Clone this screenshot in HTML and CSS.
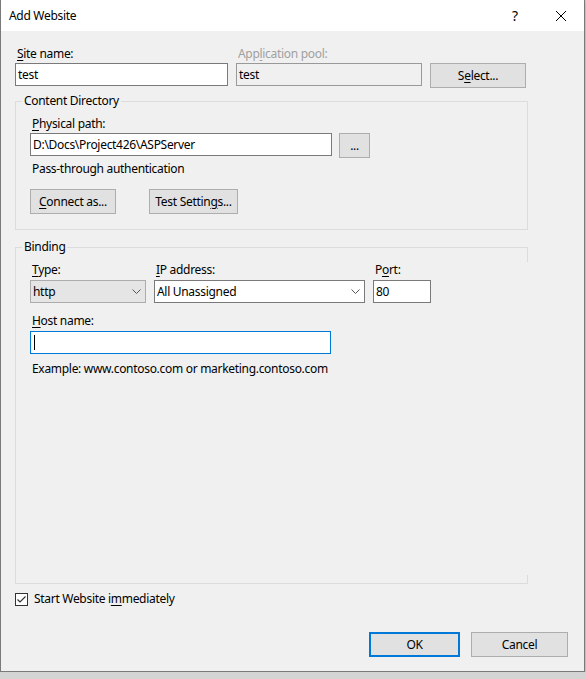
FILE: index.html
```html
<!DOCTYPE html>
<html lang="en">
<head>
    <meta charset="UTF-8">
    <title>Add Website</title>
    <link rel="stylesheet" href="styles.css">
</head>
<body>
<div class="window">
    <div class="titlebar">
        <span class="title">Add Website</span>
        <span class="caption-btn help">?</span>
        <span class="caption-btn close">
            <svg width="10" height="10" viewBox="0 0 10 10"><path d="M0 0L10 10M10 0L0 10" stroke="#000" stroke-width="1" fill="none"/></svg>
        </span>
    </div>

    <div class="body">
        <div class="site-row">
            <div class="lbl"><u>S</u>ite name:</div>
            <div class="lbl disabled">App<u>l</u>ication pool:</div>
            <div></div>
            <div class="box">test</div>
            <div class="box readonly">test</div>
            <button class="btn select">S<u>e</u>lect...</button>
        </div>

        <fieldset class="group content-dir">
            <legend>Content Directory</legend>
            <div class="lbl"><u>P</u>hysical path:</div>
            <div class="path-row">
                <div class="box path">D:\Docs\Project426\ASPServer</div>
                <button class="btn browse">...</button>
            </div>
            <div class="note">Pass-through authentication</div>
            <div class="btn-row">
                <button class="btn connect"><u>C</u>onnect as...</button>
                <button class="btn test">Test Settin<u>g</u>s...</button>
            </div>
        </fieldset>

        <fieldset class="group binding">
            <legend>Binding</legend>
            <div class="binding-row">
                <div class="lbl"><u>T</u>ype:</div>
                <div class="lbl"><u>I</u>P address:</div>
                <div class="lbl">P<u>o</u>rt:</div>
                <div class="box combo flat">http<svg class="chev" width="9" height="5" viewBox="0 0 9 5"><path d="M0.5 0.5L4.5 4.5L8.5 0.5" stroke="#555" fill="none"/></svg></div>
                <div class="box combo">All Unassigned<svg class="chev" width="9" height="5" viewBox="0 0 9 5"><path d="M0.5 0.5L4.5 4.5L8.5 0.5" stroke="#555" fill="none"/></svg></div>
                <div class="box">80</div>
            </div>
            <div class="lbl host-lbl"><u>H</u>ost name:</div>
            <div class="box host focused"><span class="caret"></span></div>
            <div class="note example">Example: www.contoso.com or marketing.contoso.com</div>
        </fieldset>
    </div>

    <div class="footer">
        <div class="check-row">
            <span class="checkbox">
                <svg width="11" height="11" viewBox="0 0 11 11"><path d="M1.5 5.5L4 8L9.5 2.5" stroke="#333" stroke-width="1.2" fill="none"/></svg>
            </span>
            <span>Start Website i<u>m</u>mediately</span>
        </div>
        <div class="dialog-btns">
            <button class="btn ok">OK</button>
            <button class="btn cancel">Cancel</button>
        </div>
    </div>
</div>
</body>
</html>
```

FILE: styles.css
```css
body {
    margin: 0;
    background: #d4d4d4;
    font-family: "Noto Sans", "Liberation Sans", sans-serif;
    font-size: 12px;
    line-height: 16px;
    letter-spacing: -0.3px;
    color: #000;
}

.window {
    box-sizing: border-box;
    width: 585px;
    height: 672px;
    background: #f0f0f0;
    border-left: 1px solid #7a7a7a;
    border-right: 1px solid #7a7a7a;
    border-bottom: 1px solid #7a7a7a;
    display: flex;
    flex-direction: column;
    box-shadow: 0 1px 4px rgba(0, 0, 0, 0.25);
}

/* title bar */
.titlebar {
    height: 31px;
    background: #fff;
    display: flex;
    align-items: center;
    flex: none;
}
.title {
    flex: 1;
    padding-left: 8px;
}
.caption-btn {
    width: 46px;
    height: 31px;
    display: flex;
    align-items: center;
    justify-content: center;
}
.help {
    font-size: 14px;
    padding-left: 2px;
}

/* dialog body */
.body {
    flex: 1;
    display: flex;
    flex-direction: column;
    padding: 15px 0 0 14px;
    width: 513px;
}

.lbl u, .btn u, .check-row u {
    text-decoration-thickness: 1px;
    text-underline-offset: 2px;
}
.lbl {
    padding-left: 2px;
}
.disabled {
    color: #a0a0a0;
}

.box {
    height: 23px;
    box-sizing: border-box;
    border: 1px solid #7a7a7a;
    background: #fff;
    padding: 0 2px;
    line-height: 21px;
    white-space: nowrap;
    overflow: hidden;
}
.readonly {
    background: #f0f0f0;
    border-color: #999;
}

.btn {
    font: inherit;
    letter-spacing: inherit;
    height: 25px;
    box-sizing: border-box;
    border: 1px solid #adadad;
    background: #e1e1e1;
    padding: 0;
    color: #000;
}

.site-row {
    display: grid;
    grid-template-columns: 213px 186px 96px;
    column-gap: 8px;
    row-gap: 1px;
    align-items: start;
}

/* group boxes */
.group {
    margin: 0;
    border: 1px solid #dcdcdc;
    padding: 7px 14px 15px 14px;
    min-width: 0;
}
.group legend {
    padding: 0 2px;
    margin-left: -8px;
    line-height: 16px;
}
.content-dir {
    margin-top: 5px;
}
.content-dir .lbl {
    margin-bottom: 1px;
}
.path-row {
    display: flex;
    gap: 7px;
    align-items: flex-start;
}
.path {
    width: 302px;
}
.browse {
    width: 31px;
}
.note {
    margin-top: 3px;
    padding-left: 2px;
}
.btn-row {
    display: flex;
    gap: 33px;
    margin-top: 12px;
}
.connect {
    width: 86px;
}
.test {
    width: 89px;
}

.binding {
    margin-top: 9px;
    flex: 1;
    position: relative;
}
/* the right edge of this frame is only painted near its corners */
.binding::after {
    content: "";
    position: absolute;
    right: -1px;
    top: 7px;
    bottom: 8px;
    width: 1px;
    background: #f0f0f0;
}
.binding-row {
    display: grid;
    grid-template-columns: 116px 211px 58px;
    column-gap: 8px;
    row-gap: 2px;
}
.combo {
    display: flex;
    align-items: center;
    justify-content: space-between;
    padding-right: 4px;
}
.flat {
    background: #e5e5e5;
    border-color: #acacac;
}
.host-lbl {
    margin-top: 10px;
    margin-bottom: 2px;
}
.host {
    width: 301px;
    border-color: #0078d7;
    display: flex;
    align-items: center;
}
.caret {
    width: 1px;
    height: 15px;
    background: #000;
    margin-left: 1px;
}
.example {
    margin-top: 7px;
}

/* footer */
.footer {
    flex: none;
    padding: 7px 16px 14px 14px;
}
.check-row {
    display: flex;
    align-items: center;
    gap: 6px;
}
.checkbox {
    width: 13px;
    height: 13px;
    box-sizing: border-box;
    border: 1px solid #333;
    background: #fff;
    display: flex;
    align-items: center;
    justify-content: center;
}
.dialog-btns {
    display: flex;
    justify-content: flex-end;
    gap: 11px;
    margin-top: 25px;
}
.ok {
    width: 91px;
    border: 2px solid #0078d7;
}
.cancel {
    width: 97px;
}
```
